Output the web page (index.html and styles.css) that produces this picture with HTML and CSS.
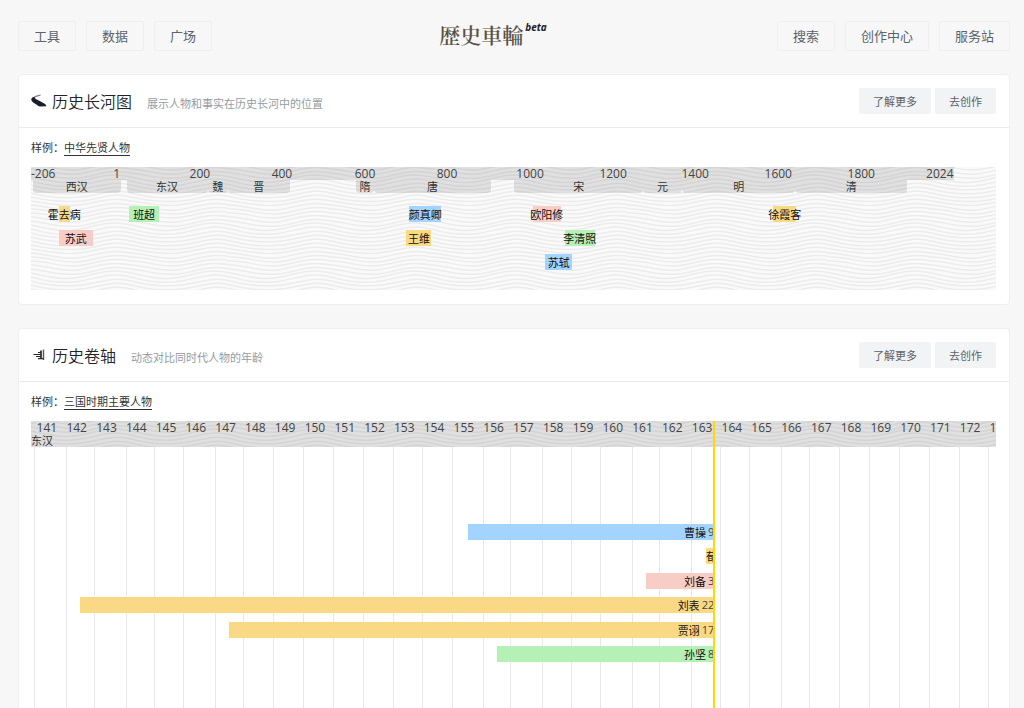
FILE: index.html
```html
<!DOCTYPE html>
<html lang="zh-CN">
<head>
<meta charset="utf-8">
<meta name="viewport" content="width=device-width, initial-scale=1">
<title>歴史車輪</title>
<link rel="stylesheet" href="styles.css">
</head>
<body>
<div class="page">
  <header class="topbar">
    <nav class="nav">
      <a class="nav-link" href="#tools">工具</a>
      <a class="nav-link" href="#data">数据</a>
      <a class="nav-link" href="#plaza">广场</a>
    </nav>
    <a class="logo" href="#home"><span class="logo-name" lang="ja">歴史車輪</span><span class="logo-beta">beta</span></a>
    <nav class="nav nav-end">
      <a class="nav-link" href="#search">搜索</a>
      <a class="nav-link" href="#studio">创作中心</a>
      <a class="nav-link" href="#service">服务站</a>
    </nav>
  </header>

  <main class="cards">
    <section class="card">
      <div class="card-head">
        <svg class="card-icon" viewBox="0 0 16 16" aria-hidden="true">
          <path d="M9.500 2.200C5.500 3 3 3.600 3.400 5" fill="none" stroke="#7b808b" stroke-width="1.200"/>
          <path d="M3.200 3.800C1.200 4.400 0 5.600 .3 6.900C.8 8.800 3.200 9.800 5.400 11.600C6.600 12.800 7.600 13.400 9 13.400L15.300 13.300C15.400 11.400 12.700 10.400 9.800 8.600C7.400 7 3.600 6.200 3.200 3.800Z" fill="#1a1d2b"/>
        </svg>
        <h2 class="card-title">历史长河图</h2>
        <p class="card-desc">展示人物和事实在历史长河中的位置</p>
        <div class="card-actions">
          <button class="btn" type="button">了解更多</button>
          <button class="btn" type="button">去创作</button>
        </div>
      </div>
      <div class="card-body">
        <p class="sample">样例：<a class="sample-link" href="#sages">中华先贤人物</a></p>
        <div class="river">
          <svg class="waves" aria-hidden="true">
            <defs>
              <pattern id="wave" width="100" height="48" patternUnits="userSpaceOnUse">
                <g fill="none" stroke="#ececec" stroke-width="1.500">
                  <path d="M0 -2C18 -2 26 4 44 3S76 -7 100 -2"/>
                  <path d="M0 2C18 3 28 9 46 7S76 -3 100 2"/>
                  <path d="M0 6C18 8 30 13 48 11S76 1 100 6"/>
                  <path d="M0 10C14 13 32 18 50 14S80 5 100 10"/>
                  <path d="M0 14C14 18 32 21 50 18S80 9 100 14"/>
                  <path d="M0 18C14 22 32 24 50 22S82 13 100 18"/>
                  <path d="M0 22C14 26 32 28 50 26S82 17 100 22"/>
                  <path d="M0 26C14 30 30 32 50 30S82 21 100 26"/>
                  <path d="M0 30C14 33 30 36 50 34S82 25 100 30"/>
                  <path d="M0 34C16 36 30 40 48 38S80 29 100 34"/>
                  <path d="M0 38C18 39 28 45 46 43S78 33 100 38"/>
                  <path d="M0 42C18 42 28 48 46 47S78 37 100 42"/>
                  <path d="M0 46C18 46 26 52 44 51S76 41 100 46"/>
                </g>
              </pattern>
            </defs>
            <rect width="100%" height="100%" fill="#fafafa"/>
            <rect width="100%" height="100%" fill="url(#wave)"/>
          </svg>
          <div class="river-axis">
            <span class="tick tick-first">-206</span>
            <span class="tick" style="left:9.300%">1</span>
            <span class="tick" style="left:18.300%">200</span>
            <span class="tick" style="left:27.200%">400</span>
            <span class="tick" style="left:36.200%">600</span>
            <span class="tick" style="left:45.100%">800</span>
            <span class="tick" style="left:54.100%">1000</span>
            <span class="tick" style="left:63.100%">1200</span>
            <span class="tick" style="left:72%">1400</span>
            <span class="tick" style="left:81%">1600</span>
            <span class="tick" style="left:90%">1800</span>
            <span class="tick tick-last">2024</span>
          </div>
          <div class="eras">
            <span class="era" style="left:.2%;width:9.100%">西汉</span>
            <span class="era" style="left:9.900%;width:8.400%">东汉</span>
            <span class="era" style="left:18.300%;width:2.100%">魏</span>
            <span class="era" style="left:20.400%;width:6.400%">晋</span>
            <span class="era" style="left:33.700%;width:1.800%">隋</span>
            <span class="era" style="left:35.500%;width:12.200%">唐</span>
            <span class="era" style="left:50.100%;width:13.300%">宋</span>
            <span class="era" style="left:63.400%;width:4.100%">元</span>
            <span class="era" style="left:67.500%;width:11.700%">明</span>
            <span class="era" style="left:79.200%;width:11.600%">清</span>
          </div>
          <div class="lives">
            <div class="lane">
              <span class="life gold" style="left:2.900%;width:1.100%">霍去病</span>
              <span class="life green" style="left:10.200%;width:3.050%">班超</span>
              <span class="life blue" style="left:39.200%;width:3.300%">颜真卿</span>
              <span class="life pink" style="left:52%;width:2.900%">欧阳修</span>
              <span class="life gold" style="left:76.900%;width:2.400%">徐霞客</span>
            </div>
            <div class="lane">
              <span class="life pink" style="left:2.900%;width:3.500%">苏武</span>
              <span class="life gold" style="left:38.900%;width:2.600%">王维</span>
              <span class="life green" style="left:55.300%;width:3.150%">李清照</span>
            </div>
            <div class="lane">
              <span class="life blue" style="left:53.300%;width:2.800%">苏轼</span>
            </div>
          </div>
        </div>
      </div>
    </section>

    <section class="card card-fill">
      <div class="card-head">
        <svg class="card-icon" viewBox="0 0 16 16" aria-hidden="true">
          <path d="M12.500 2.500V13" stroke="#55565b" stroke-width="1.400"/>
          <path d="M10 3.500V12" stroke="#1d1e22" stroke-width="1.600"/>
          <path d="M7 5.500H10M2.500 7.500H10M5 9.500H10M7 11.600H12.500" stroke="#26272b" stroke-width="1.200"/>
        </svg>
        <h2 class="card-title">历史卷轴</h2>
        <p class="card-desc">动态对比同时代人物的年龄</p>
        <div class="card-actions">
          <button class="btn" type="button">了解更多</button>
          <button class="btn" type="button">去创作</button>
        </div>
      </div>
      <div class="card-body card-body-fill">
        <p class="sample">样例：<a class="sample-link" href="#three-kingdoms">三国时期主要人物</a></p>
        <div class="scroll">
          <svg class="grid-lines" aria-hidden="true">
            <g stroke="#e8e8ec" stroke-width="1" shape-rendering="crispEdges">
              <line x1=".36%" x2=".36%" y2="100%"/><line x1="3.680%" x2="3.680%" y2="100%"/><line x1="6.580%" x2="6.580%" y2="100%"/><line x1="9.900%" x2="9.900%" y2="100%"/><line x1="12.800%" x2="12.800%" y2="100%"/><line x1="15.850%" x2="15.850%" y2="100%"/><line x1="19.120%" x2="19.120%" y2="100%"/><line x1="22.020%" x2="22.020%" y2="100%"/><line x1="25.130%" x2="25.130%" y2="100%"/><line x1="28.240%" x2="28.240%" y2="100%"/><line x1="31.350%" x2="31.350%" y2="100%"/><line x1="34.460%" x2="34.460%" y2="100%"/><line x1="37.560%" x2="37.560%" y2="100%"/><line x1="40.570%" x2="40.570%" y2="100%"/><line x1="43.680%" x2="43.680%" y2="100%"/><line x1="46.840%" x2="46.840%" y2="100%"/><line x1="49.690%" x2="49.690%" y2="100%"/><line x1="53.010%" x2="53.010%" y2="100%"/><line x1="56.060%" x2="56.060%" y2="100%"/><line x1="59.020%" x2="59.020%" y2="100%"/><line x1="62.330%" x2="62.330%" y2="100%"/><line x1="65.180%" x2="65.180%" y2="100%"/><line x1="68.450%" x2="68.450%" y2="100%"/><line x1="71.400%" x2="71.400%" y2="100%"/><line x1="74.460%" x2="74.460%" y2="100%"/><line x1="77.770%" x2="77.770%" y2="100%"/><line x1="80.670%" x2="80.670%" y2="100%"/><line x1="83.780%" x2="83.780%" y2="100%"/><line x1="86.890%" x2="86.890%" y2="100%"/><line x1="90%" x2="90%" y2="100%"/><line x1="93.110%" x2="93.110%" y2="100%"/><line x1="96.220%" x2="96.220%" y2="100%"/><line x1="99.220%" x2="99.220%" y2="100%"/>
            </g>
          </svg>
          <div class="scroll-head">
            <svg class="waves" aria-hidden="true">
              <rect width="100%" height="100%" fill="#fafafa"/>
              <rect width="100%" height="100%" fill="url(#wave)"/>
            </svg>
            <div class="years">
              <span>141</span><span>142</span><span>143</span><span>144</span><span>145</span><span>146</span><span>147</span><span>148</span><span>149</span><span>150</span><span>151</span><span>152</span><span>153</span><span>154</span><span>155</span><span>156</span><span>157</span><span>158</span><span>159</span><span>160</span><span>161</span><span>162</span><span>163</span><span>164</span><span>165</span><span>166</span><span>167</span><span>168</span><span>169</span><span>170</span><span>171</span><span>172</span><span>173</span>
            </div>
            <div class="dynasty">东汉</div>
          </div>
          <div class="ages">
            <div class="age blue" style="width:36.100%">曹操 <small>9</small></div>
            <div class="age age-new gold" style="width:1.200%">荀彧 <small>0</small></div>
            <div class="age pink" style="width:10%">刘备 <small>3</small></div>
            <div class="age gold" style="width:92.900%">刘表 <small>22</small></div>
            <div class="age gold" style="width:71%">贾诩 <small>17</small></div>
            <div class="age green" style="width:31.800%">孙坚 <small>8</small></div>
          </div>
          <div class="now"></div>
        </div>
      </div>
    </section>
  </main>
</div>
</body>
</html>
```

FILE: styles.css
```css
* {
  box-sizing: border-box;
}

body {
  margin: 0;
  background: #f7f7f7;
  color: #333;
  font-family: "Noto Sans CJK SC", sans-serif;
  font-size: 11px;
  font-weight: 400;
  line-height: 16px;
}

h2,
p {
  margin: 0;
}

.page {
  display: flex;
  flex-direction: column;
  height: 100vh;
  overflow: hidden;
  padding: 0 14px 0 18px;
}

/* top bar */
.topbar {
  display: grid;
  grid-template-columns: 1fr auto 1fr;
  align-items: center;
  height: 74px;
  padding-bottom: 2px;
}

.nav {
  display: flex;
  gap: 10px;
}

.nav-end {
  justify-content: flex-end;
}

.nav-link {
  padding: 0 15px;
  border: 1px solid #eceef1;
  border-radius: 2px;
  color: #5c636a;
  font-size: 13px;
  line-height: 28px;
  text-decoration: none;
}

.logo {
  display: flex;
  align-items: flex-start;
  gap: 2px;
  margin-left: -42px;
  padding-bottom: 4px;
  color: #5b5145;
  text-decoration: none;
}

.logo-name {
  font-family: "Noto Serif CJK JP", "Noto Sans CJK JP", serif;
  font-size: 21px;
  font-weight: 600;
  line-height: 28px;
}

.logo-beta {
  color: #222;
  font-family: "Open Sans", sans-serif;
  font-size: 10px;
  font-style: italic;
  font-weight: 700;
  line-height: 14px;
}

/* cards */
.cards {
  display: flex;
  flex: 1;
  flex-direction: column;
  gap: 23px;
  min-height: 0;
}

.card {
  border: 1px solid #efefef;
  border-radius: 4px;
  background: #fff;
}

.card-fill {
  display: flex;
  flex: 1;
  flex-direction: column;
  border-bottom: 0;
  border-radius: 4px 4px 0 0;
}

.card-head {
  display: flex;
  align-items: center;
  height: 53px;
  padding: 0 13px 0 12px;
  border-bottom: 1px solid #ebebeb;
}

.card-icon {
  width: 16px;
  height: 16px;
  margin-right: 5px;
}

.card-title {
  color: #212529;
  font-size: 16px;
  font-weight: 350;
  line-height: 24px;
}

.card-desc {
  margin-left: 15px;
  padding-top: 3px;
  color: #949ba2;
}

.card-actions {
  display: flex;
  gap: 4px;
  margin-left: auto;
}

.btn {
  height: 26px;
  padding: 0 14px;
  border: 0;
  border-radius: 2px;
  background: #f1f3f5;
  color: #5c636a;
  font: inherit;
}

.card-body {
  padding: 11px 13px 14px 12px;
}

.card-body-fill {
  display: flex;
  flex: 1;
  flex-direction: column;
  padding-bottom: 0;
}

.sample {
  margin-bottom: 11px;
}

.sample-link {
  display: inline-block;
  border-bottom: 1px solid #333;
  color: inherit;
  line-height: 15px;
  text-decoration: none;
}

/* long river chart */
.river {
  position: relative;
  height: 123px;
}

.waves {
  position: absolute;
  inset: 0;
  width: 100%;
  height: 100%;
}

.river-axis {
  position: relative;
  width: 95.6%;
  height: 13px;
  background: rgba(0, 0, 0, 0.1);
  color: #444;
  font-family: "Open Sans", sans-serif;
  font-size: 12px;
  font-weight: 400;
  line-height: 13px;
}

.tick {
  position: absolute;
  top: 0;
  transform: translateX(-50%);
}

.tick-first {
  left: 0;
  transform: none;
}

.tick-last {
  right: 0;
  transform: none;
}

.eras {
  position: relative;
  height: 13px;
}

.era {
  position: absolute;
  top: 0;
  height: 13px;
  border-radius: 0 0 4px 4px;
  background: rgba(0, 0, 0, 0.1);
  line-height: 13px;
  text-align: center;
}

.lives {
  display: grid;
  gap: 8px;
  padding-top: 13px;
}

.lane {
  position: relative;
  height: 16px;
}

.life {
  position: absolute;
  top: 0;
  display: flex;
  justify-content: center;
  height: 16px;
  color: #111;
  white-space: nowrap;
}

.gold {
  background: #fad984;
}

.green {
  background: #b5f0b5;
}

.blue {
  background: #a3d4ff;
}

.pink {
  background: #f8cdc6;
}

/* scroll chart */
.scroll {
  position: relative;
  flex: 1;
  overflow: hidden;
}

.grid-lines {
  position: absolute;
  inset: 0;
  width: 100%;
  height: 100%;
}

.scroll-head {
  position: relative;
  height: 26px;
  background: #fafafa;
}

.years {
  position: relative;
  display: flex;
  height: 13px;
  padding-left: 1px;
  background: rgba(0, 0, 0, 0.1);
  font-family: "Open Sans", sans-serif;
  font-size: 12px;
  font-weight: 400;
  line-height: 13px;
  color: #444;
}

.years span {
  flex: 0 0 3.09%;
  text-align: center;
}

.dynasty {
  position: relative;
  height: 13px;
  background: rgba(0, 0, 0, 0.1);
  line-height: 13px;
}

.ages {
  position: relative;
  display: flex;
  flex-direction: column;
  align-items: flex-end;
  justify-content: space-between;
  width: 70.8%;
  height: 138px;
  margin-top: 77px;
}

.age {
  display: flex;
  justify-content: flex-end;
  gap: 2px;
  height: 16px;
  overflow: hidden;
  color: #111;
  white-space: nowrap;
}

.age small {
  font-family: "Open Sans", sans-serif;
  font-size: 11px;
  color: #444;
}

.age-new {
  justify-content: flex-start;
}

.now {
  position: absolute;
  top: 0;
  bottom: 0;
  left: 70.7%;
  width: 2px;
  background: #ffd900;
}
```
